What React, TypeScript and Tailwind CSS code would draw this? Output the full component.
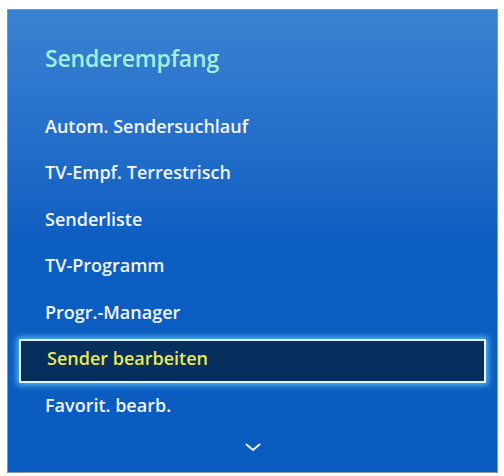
import React from "react";

const items = [
  "Autom. Sendersuchlauf",
  "TV-Empf. Terrestrisch",
  "Senderliste",
  "TV-Programm",
  "Progr.-Manager",
  "Sender bearbeiten",
  "Favorit. bearb.",
];

export default function App() {
  return (
    <div className="w-[504px] h-[476px] bg-white pt-[9px] pl-[7px]" style={{ fontFamily: '"Open Sans", "Liberation Sans", sans-serif' }}>
      <div className="w-[491px] h-[464px] border border-[#8796aa] bg-gradient-to-b from-[#3a82d2] via-[#0d5ec2] to-[#0a5bbf] flex flex-col">
        <div className="h-[93px] pl-[37px] pt-[32px]">
          <div className="text-[23px] leading-[32px] font-semibold text-[#a2f0da] tracking-[-0.2px]">Senderempfang</div>
        </div>
        <div className="flex flex-col">
          {items.map((t, i) => {
            const sel = i === 5;
            return (
              <div key={t} className="h-[46.5px] flex items-center px-[11px]">
                {sel ? (
                  <div className="w-full h-[44px] mt-[4px] flex items-center pl-[26px] bg-[#062f5e] border-2 border-[#e6f6ff] shadow-[0_0_6px_2px_rgba(110,210,255,0.8)]">
                    <span className="text-[18px] font-semibold text-[#ece84e] mt-[-5px]">{t}</span>
                  </div>
                ) : (
                  <span className="pl-[26px] text-[18px] font-semibold text-[#f2f6ff]">{t}</span>
                )}
              </div>
            );
          })}
        </div>
        <div className="flex justify-center pt-[14px]">
          <svg width="16" height="9" viewBox="0 0 16 9" fill="none">
            <path d="M1.5 1.5 L8 7 L14.5 1.5" stroke="#e8f2ff" strokeWidth="2" strokeLinecap="round" strokeLinejoin="round" />
          </svg>
        </div>
      </div>
    </div>
  );
}
